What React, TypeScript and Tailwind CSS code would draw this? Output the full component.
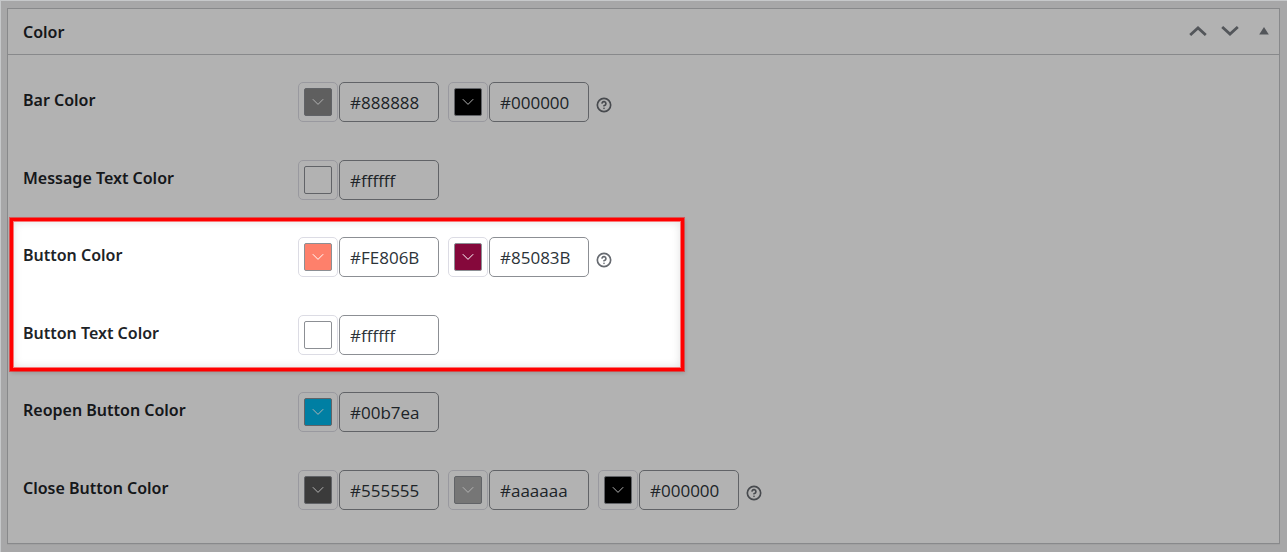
import React from "react";
import { CircleQuestionMark } from "lucide-react";

type Swatch = {
  value: string;
  fill: string;
};

type Row = {
  id: string;
  label: string;
  swatches: Swatch[];
  help?: boolean;
};

const rows: Row[] = [
  {
    id: "bar-color",
    label: "Bar Color",
    swatches: [
      { value: "#888888", fill: "bg-[#888888]" },
      { value: "#000000", fill: "bg-black" },
    ],
    help: true,
  },
  {
    id: "message-text-color",
    label: "Message Text Color",
    swatches: [{ value: "#ffffff", fill: "bg-white" }],
  },
  {
    id: "button-color",
    label: "Button Color",
    swatches: [
      { value: "#FE806B", fill: "bg-[#FE806B]" },
      { value: "#85083B", fill: "bg-[#85083B]" },
    ],
    help: true,
  },
  {
    id: "button-text-color",
    label: "Button Text Color",
    swatches: [{ value: "#ffffff", fill: "bg-white" }],
  },
  {
    id: "reopen-button-color",
    label: "Reopen Button Color",
    swatches: [{ value: "#00b7ea", fill: "bg-[#00b7ea]" }],
  },
  {
    id: "close-button-color",
    label: "Close Button Color",
    swatches: [
      { value: "#555555", fill: "bg-[#555555]" },
      { value: "#aaaaaa", fill: "bg-[#aaaaaa]" },
      { value: "#000000", fill: "bg-black" },
    ],
    help: true,
  },
];

function ColorField({ id, label, swatch }: { id: string; label: string; swatch: Swatch }) {
  return (
    <div className="flex gap-px">
      <button
        type="button"
        aria-label={`Pick ${label}`}
        className="flex h-10 w-10 items-center justify-center rounded-[5px] border border-[#dcdce4]"
      >
        <span
          className={`flex h-7 w-7 items-center justify-center rounded-[2px] border border-[#8c8f94] ${swatch.fill}`}
        >
          {swatch.value !== "#ffffff" && (
            <svg viewBox="0 0 12 8" className="h-2 w-3" fill="none" stroke="#fff" strokeWidth="1">
              <path d="M0.8 1.2 L6 6.4 L11.2 1.2" />
            </svg>
          )}
        </span>
      </button>
      <input
        id={id}
        type="text"
        aria-label={label}
        defaultValue={swatch.value}
        className="h-10 w-[100px] rounded-[5px] border border-[#8c8f94] bg-white px-2.5 font-['Open_Sans','Noto_Sans',sans-serif] text-[17px] text-[#2c3338]"
      />
    </div>
  );
}

function SettingRow({ row }: { row: Row }) {
  return (
    <div className="flex items-start not-last:odd:mb-[38px] not-last:even:mb-[37px]">
      <label htmlFor={`${row.id}-0`} className="w-[275px] shrink-0 pt-1.5 leading-6 font-semibold">
        {row.label}
      </label>
      <div className="flex items-center gap-[9px]">
        {row.swatches.map((swatch, i) => (
          <ColorField
            key={i}
            id={`${row.id}-${i}`}
            label={`${row.label} ${i + 1}`}
            swatch={swatch}
          />
        ))}
        {row.help && (
          <button type="button" aria-label="Help" className="-ml-0.5 pt-1.5 text-[#666a70]">
            <CircleQuestionMark className="h-4 w-4" strokeWidth={2.5} />
          </button>
        )}
      </div>
    </div>
  );
}

// Frame around the button settings, everything outside of it is dimmed
function Spotlight() {
  return (
    <div className="pointer-events-none absolute top-[163px] left-0.5 h-[153px] w-[674px] border-3 border-[#ff0000] shadow-[inset_0_0_0_1px_rgba(255,0,0,0.5),inset_0_0_8px_1px_rgba(0,0,0,0.12),0_0_0_1px_rgba(255,0,0,0.5),1px_2px_4px_0_rgba(0,0,0,0.15),0_0_0_3000px_rgba(0,0,0,0.3)]" />
  );
}

export default function App() {
  return (
    <main className="min-h-screen overflow-hidden border-t border-l border-[#c6c8ca] bg-[#f0f0f1] pt-[7px] pr-[7px] pb-2 pl-1.5 font-['Noto_Sans','Open_Sans',sans-serif] text-base text-[#1d2327]">
      <section className="border border-[#c3c4c7] bg-white shadow-[0_1px_1px_rgba(0,0,0,0.04)]">
        <header className="flex h-[46px] items-center justify-between border-b border-[#c3c4c7] pr-2.5 pl-[15px]">
          <h2 className="font-semibold">Color</h2>
          <div className="flex items-center pb-0.5 text-[#787c82]">
            <button type="button" aria-label="Move up" className="mr-3.5">
              <svg viewBox="0 0 18 10" className="h-2.5 w-[18px]" fill="none" stroke="currentColor" strokeWidth="2.8">
                <path d="M1.2 9 L9 2 L16.8 9" />
              </svg>
            </button>
            <button type="button" aria-label="Move down" className="mr-5">
              <svg viewBox="0 0 18 10" className="h-2.5 w-[18px]" fill="none" stroke="currentColor" strokeWidth="2.8">
                <path d="M1.2 1 L9 8 L16.8 1" />
              </svg>
            </button>
            <button type="button" aria-label="Toggle panel">
              <svg viewBox="0 0 10 8" className="h-2 w-2.5" fill="currentColor">
                <path d="M5 0 L9.8 7.5 H0.2 Z" />
              </svg>
            </button>
          </div>
        </header>
        <div className="relative pt-[27px] pb-[33px] pl-[15px]">
          <div>
            {rows.map((row) => (
              <SettingRow key={row.id} row={row} />
            ))}
          </div>
          <Spotlight />
        </div>
      </section>
    </main>
  );
}
